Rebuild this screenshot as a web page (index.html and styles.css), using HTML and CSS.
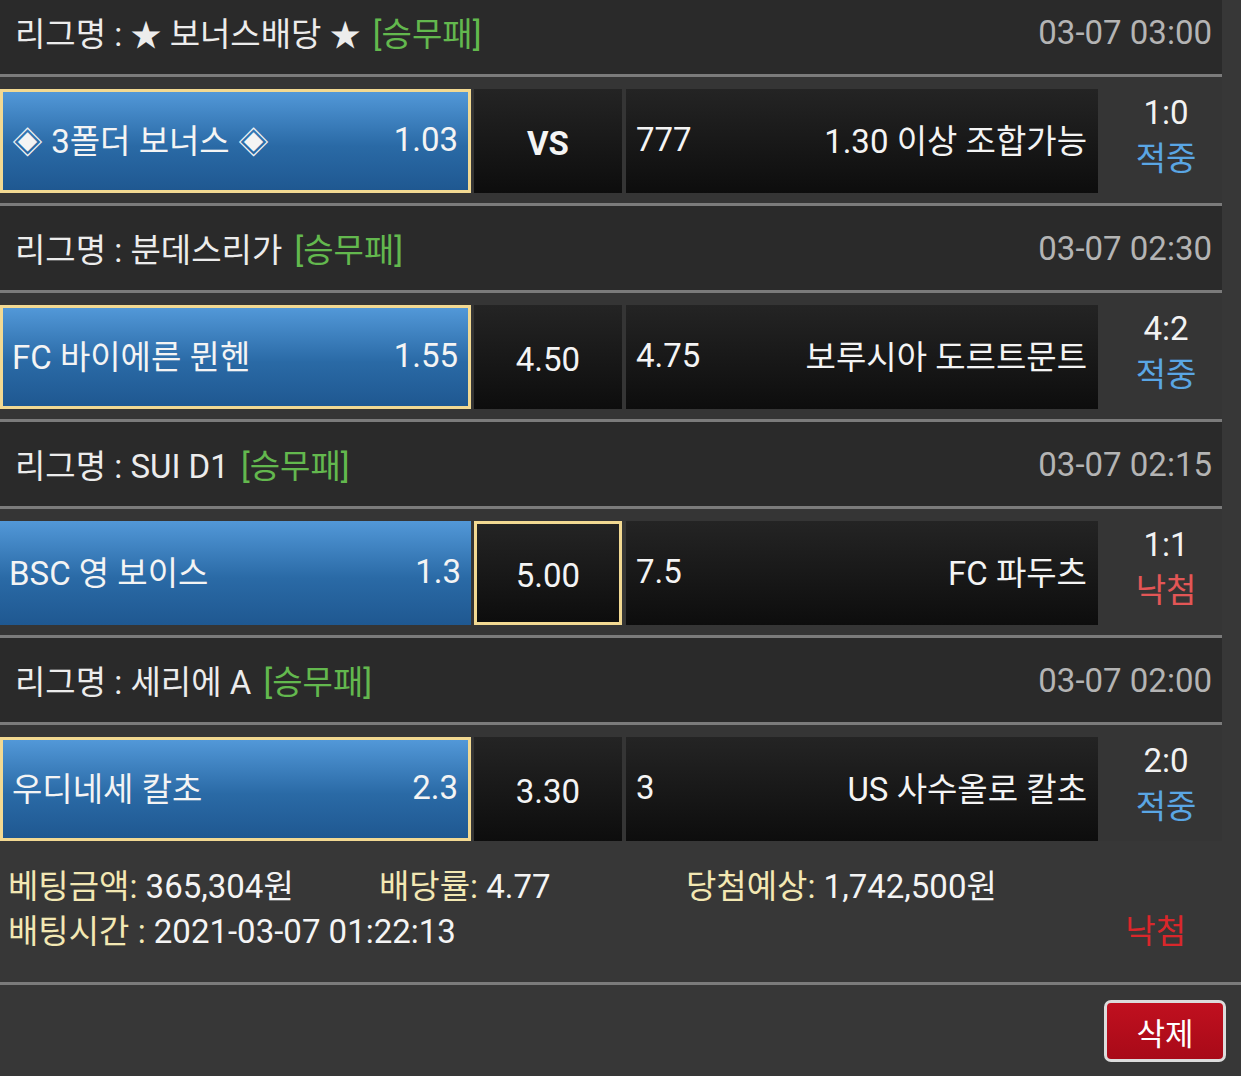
FILE: index.html
```html
<!DOCTYPE html>
<html lang="ko">
    <head>
        <meta charset="UTF-8">
        <title>베팅내역</title>
        <link rel="stylesheet" href="styles.css">
    </head>
    <body>
        <div class="slip">
            <div class="games">
                <section class="game">
                    <div class="league">
                        <span class="league-name">리그명 : <i class="sym">★</i> 보너스배당 <i class="sym">★</i> <em class="type">[승무패]</em></span>
                        <span class="time">03-07 03:00</span>
                    </div>
                    <div class="match">
                        <div class="cell home picked"><span><i class="sym">◈</i> 3폴더 보너스 <i class="sym">◈</i></span><span>1.03</span></div>
                        <div class="cell draw"><b>VS</b></div>
                        <div class="cell away"><span>777</span><span>1.30 이상 조합가능</span></div>
                        <div class="result"><span>1:0</span><span class="hit">적중</span></div>
                    </div>
                </section>
                <section class="game">
                    <div class="league">
                        <span class="league-name">리그명 : 분데스리가 <em class="type">[승무패]</em></span>
                        <span class="time">03-07 02:30</span>
                    </div>
                    <div class="match">
                        <div class="cell home picked"><span>FC 바이에른 뮌헨</span><span>1.55</span></div>
                        <div class="cell draw"><span>4.50</span></div>
                        <div class="cell away"><span>4.75</span><span>보루시아 도르트문트</span></div>
                        <div class="result"><span>4:2</span><span class="hit">적중</span></div>
                    </div>
                </section>
                <section class="game">
                    <div class="league">
                        <span class="league-name">리그명 : SUI D1 <em class="type">[승무패]</em></span>
                        <span class="time">03-07 02:15</span>
                    </div>
                    <div class="match">
                        <div class="cell home blue"><span>BSC 영 보이스</span><span>1.3</span></div>
                        <div class="cell draw picked"><span>5.00</span></div>
                        <div class="cell away"><span>7.5</span><span>FC 파두츠</span></div>
                        <div class="result"><span>1:1</span><span class="miss">낙첨</span></div>
                    </div>
                </section>
                <section class="game">
                    <div class="league">
                        <span class="league-name">리그명 : 세리에 A <em class="type">[승무패]</em></span>
                        <span class="time">03-07 02:00</span>
                    </div>
                    <div class="match">
                        <div class="cell home picked"><span>우디네세 칼초</span><span>2.3</span></div>
                        <div class="cell draw"><span>3.30</span></div>
                        <div class="cell away"><span>3</span><span>US 사수올로 칼초</span></div>
                        <div class="result"><span>2:0</span><span class="hit">적중</span></div>
                    </div>
                </section>
            </div>
            <div class="summary">
                <div class="summary-line">
                    <span><i>베팅금액:</i> 365,304원</span>
                    <span><i>배당률:</i> 4.77</span>
                    <span><i>당첨예상:</i> 1,742,500원</span>
                </div>
                <div class="summary-line second">
                    <span><i>배팅시간 :</i> 2021-03-07 01:22:13</span>
                    <span class="status">낙첨</span>
                </div>
            </div>
        </div>
        <div class="actions">
            <button class="btn-delete">삭제</button>
        </div>
    </body>
</html>
```

FILE: styles.css
```css
* {
    box-sizing: border-box;
    font-family: Roboto, "Noto Sans CJK KR", "Noto Sans", sans-serif;
}
body {
    margin: 0;
    background: #373737;
    color: #f2f2f2;
    font-size: 33px;
    overflow: hidden;
}
.slip {
    margin-top: -10px;
}
.games {
    width: 1222px;
}
.game {
    border-bottom: 3px solid #7b7b7b;
}
.game:last-child {
    border-bottom: none;
}
.sym {
    font-style: normal;
    font-size: 31px;
}
.league {
    height: 87px;
    background: #2a2a2a;
    border-bottom: 3px solid #7b7b7b;
    display: flex;
    justify-content: space-between;
    align-items: center;
    padding: 0 10px 0 15px;
    color: #ececec;
}
.league .type {
    font-style: normal;
    color: #63b84e;
    margin-left: 4px;
}
.league .time {
    color: #b4b4b4;
}
.match {
    display: flex;
    padding: 12px 0 10px;
    background: #353535;
}
.game:last-child .match {
    padding-bottom: 0;
}
.cell {
    height: 104px;
    display: flex;
    align-items: center;
    justify-content: space-between;
    padding: 0 10px 4px 9px;
    background: linear-gradient(#242424, #0d0d0d);
    color: #f4f4f4;
}
.home {
    width: 471px;
}
.home.picked, .home.blue {
    background: linear-gradient(#5298d8, #2a6aa6 55%, #1f5891);
}
.cell.picked {
    border: 3px solid #f2d992;
}
.draw {
    width: 148px;
    margin-left: 3px;
    justify-content: center;
    padding: 4px 0 0;
}
.draw b {
    font-weight: bold;
}
.away {
    width: 472px;
    margin-left: 4px;
    padding: 0 11px 4px 10px;
}
.result {
    flex: 1;
    display: flex;
    flex-direction: column;
    align-items: center;
    justify-content: center;
    padding: 0 0 10px 12px;
    line-height: 46px;
}
.result .hit {
    color: #5aa6e4;
}
.result .miss {
    color: #e35656;
}
.summary {
    padding: 23px 55px 28px 8px;
    border-bottom: 3px solid #7b7b7b;
    line-height: 45px;
    color: #f4f4f4;
}
.summary i {
    font-style: normal;
    color: #f3e8b3;
}
.summary-line {
    display: grid;
    grid-template-columns: 371px 307px 1fr;
}
.summary-line.second {
    display: flex;
    justify-content: space-between;
}
.summary .status {
    color: #d9272b;
}
.actions {
    display: flex;
    justify-content: flex-end;
    padding: 15px 15px 0 0;
}
.btn-delete {
    width: 122px;
    height: 62px;
    border: 3px solid #dcdcdc;
    border-radius: 7px;
    background: linear-gradient(#c0101f, #a80a18);
    color: #fff;
    font-size: 31px;
    padding: 0;
}
```
